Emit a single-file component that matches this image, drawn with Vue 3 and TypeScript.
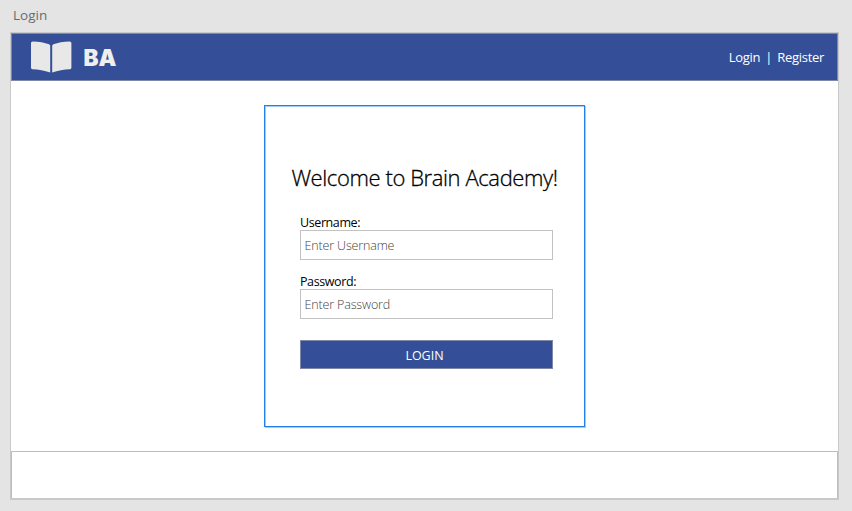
<script setup lang="ts">
import { ref } from 'vue'

const username = ref<string>('')
const password = ref<string>('')
</script>

<template>
  <div class="canvas">
    <div class="artboard-name"><span>Login</span></div>
    <div class="artboard">
      <header class="topbar">
        <div class="brand">
          <svg class="book" width="42" height="33" viewBox="0 0 42 33" fill="#e8e8e8">
            <path d="M1 2.2C1 1 1.8 .3 3 .4C9 .6 14.5 1.4 19 3.3Q20.2 3.8 20.2 4.8V31.5C14.5 29.3 8.6 28.5 2.4 28.2Q1 28.1 1 26.7Z" />
            <path d="M41.4 2.2C41.4 1 40.6 .3 39.4 .4C33.4 .6 27.9 1.4 23.4 3.3Q22.2 3.8 22.2 4.8V31.5C27.9 29.3 33.8 28.5 40 28.2Q41.4 28.1 41.4 26.7Z" />
          </svg>
          <span class="brand-name">BA</span>
        </div>
        <nav class="links">
          <a class="login-link">Login</a><span class="divider">|</span><a class="register-link">Register</a>
        </nav>
      </header>
      <main class="content">
        <form class="card" @submit.prevent>
          <h1><span>Welcome to Brain Academy!</span></h1>
          <div class="fields">
            <label for="username"><span class="user-label">Username:</span></label>
            <input id="username" v-model="username" class="user-input" type="text" placeholder="Enter Username" />
            <label for="password"><span class="pass-label">Password:</span></label>
            <input id="password" v-model="password" class="pass-input" type="password" placeholder="Enter Password" />
            <button type="submit"><span>LOGIN</span></button>
          </div>
        </form>
      </main>
      <footer class="footer"></footer>
    </div>
  </div>
</template>

<style>
body {
  margin: 0;
  background: #e4e4e4;
}
</style>

<style scoped>
.canvas {
  box-sizing: border-box;
  width: 852px;
  height: 511px;
  padding: 0 13px 11px 10px;
  background: #e4e4e4;
  font-family: "Open Sans", "Noto Sans", sans-serif;
  font-size: 13px;
  color: #000;
  overflow: hidden;
}
.artboard-name {
  height: 32px;
  padding-left: 3px;
  line-height: 31px;
  font-size: 13.5px;
  color: #6b6b6b;
}
.artboard {
  box-sizing: border-box;
  width: 829px;
  height: 468px;
  display: flex;
  flex-direction: column;
  border: 1px solid #c9c9c9;
  border-bottom-width: 2px;
  background: #fff;
}
.topbar {
  box-sizing: border-box;
  height: 48px;
  display: flex;
  justify-content: space-between;
  align-items: center;
  padding: 0 13px 0 18px;
  border: 1px solid #7f88a8;
  background: #344f98;
  color: #fff;
}
.brand {
  display: flex;
  align-items: center;
}
.book {
  display: block;
}
.brand-name {
  margin: 1px 0 0 11.5px;
  font-family: Inter, "Open Sans", sans-serif;
  font-size: 22.5px;
  font-weight: 900;
  line-height: 28px;
  color: #efefef;
}
.links {
  display: flex;
  line-height: 20px;
  letter-spacing: -0.3px;
}
.divider {
  width: 17px;
  text-align: center;
}
.content {
  flex: 1;
  display: flex;
  justify-content: center;
  align-items: flex-start;
  padding: 24px 0 0;
}
.card {
  box-sizing: border-box;
  width: 321px;
  height: 322px;
  padding-top: 55px;
  border: 1px solid #2680eb;
  box-shadow: inset 1px 1px 0 #a3c9f7, 1px 1px 0 #a3c9f7;
}
h1 {
  margin: 0;
  height: 34px;
  line-height: 32px;
  font-size: 22px;
  font-weight: 300;
  letter-spacing: -0.4px;
  -webkit-text-stroke: 0.3px #000;
  text-align: center;
  white-space: nowrap;
}
.fields {
  width: 253px;
  margin: 20px 0 0 35px;
  display: flex;
  flex-direction: column;
}
label {
  height: 15px;
  line-height: 15px;
  font-size: 12.5px;
  letter-spacing: -0.4px;
  white-space: nowrap;
}
input {
  box-sizing: border-box;
  height: 30px;
  margin: 0 0 14px;
  padding: 0 3.5px;
  border: 1px solid #c2c2c2;
  border-radius: 0;
  outline: none;
  background: #fff;
  font: 300 12.5px "Open Sans", sans-serif;
  letter-spacing: -0.15px;
}
input::placeholder {
  color: #444;
  opacity: 1;
}
button {
  height: 29px;
  margin: 7px 0 0;
  padding: 2px 4px 0 0;
  border: 1px solid #7f88a8;
  background: #344f98;
  color: #fff;
  font: 400 12.5px/25px "Open Sans", sans-serif;
}
.footer {
  box-sizing: border-box;
  height: 47px;
  border: 1px solid #bdbdbd;
  border-bottom: 0;
}
</style>
